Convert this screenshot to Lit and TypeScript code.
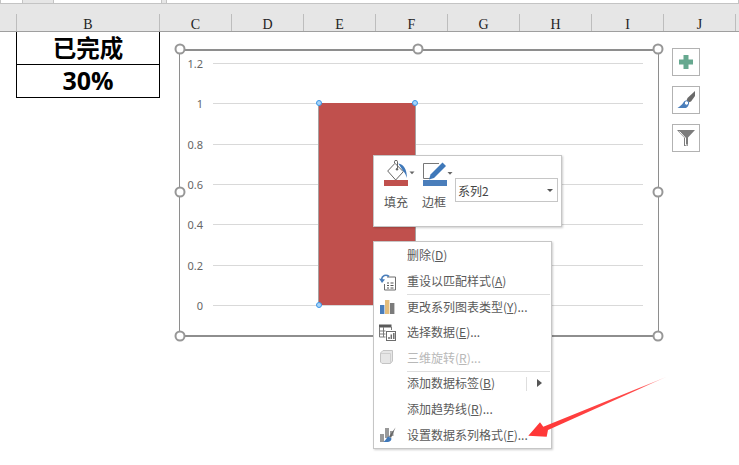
import { LitElement, html, css, svg } from "lit";
import { customElement } from "lit/decorators.js";

const COLS = [
  { n: "B", w: 143 }, { n: "C", w: 72 }, { n: "D", w: 72 }, { n: "E", w: 72 },
  { n: "F", w: 72 }, { n: "G", w: 72 }, { n: "H", w: 72 }, { n: "I", w: 72 }, { n: "J", w: 72 },
];
const TICKS = ["1.2", "1", "0.8", "0.6", "0.4", "0.2", "0"];

const ICONS: Record<string, unknown> = {
  reset: svg`<svg width="18" height="18" viewBox="0 0 18 18"><path d="M8 4h8.500v13H5.500v-6" fill="#fff" stroke="#6d6d6d"/><path d="M8 10h2M8 12.500h2M8 15h2M11.500 10h3M11.500 12.500h3M11.500 15h3" stroke="#555"/><path d="M2.500 6.500C3 2.500 7 1 10 3.500" fill="none" stroke="#4a7ebb" stroke-width="1.700"/><path d="M0 5.500l3 4.500 3-3.500z" fill="#4a7ebb"/></svg>`,
  chart: svg`<svg width="18" height="18" viewBox="0 0 18 18"><rect x="1" y="7" width="4.400" height="9" fill="#4a7ebb"/><rect x="6" y="2" width="4.400" height="14" fill="#e4bd7c"/><rect x="11" y="5" width="4.400" height="11" fill="#7b7b7b"/></svg>`,
  data: svg`<svg width="18" height="18" viewBox="0 0 18 18"><rect x="0" y="0.500" width="12.500" height="3" fill="#5a5a5a"/><path d="M.5 3v10h6M12.500 3v3M.5 7h6M.5 10h6M4.500 3v10" fill="none" stroke="#7a7a7a"/><rect x="7.500" y="7.500" width="9" height="9" fill="#fff" stroke="#6d6d6d"/><path d="M10 15v-2M12.300 15v-4.500M14.800 15V9" stroke="#6d6d6d" stroke-width="1.500"/></svg>`,
  cube: svg`<svg width="18" height="18" viewBox="0 0 18 18"><path d="M1.500 4L4 1.500h9.500V12L11.500 14.500H3L1.500 13z" fill="#e6e6e6" stroke="#c4c4c4" stroke-linejoin="round"/><path d="M1.500 4.500h10v10" fill="none" stroke="#cfcfcf"/></svg>`,
  format: svg`<svg width="18" height="18" viewBox="0 0 18 18"><rect x="1" y="8" width="4" height="8" fill="#999"/><rect x="6" y="2" width="4" height="10" fill="#999"/><rect x="11" y="5" width="3.500" height="5" fill="#999"/><path d="M16.500 1.500L10 10.500l2 1.500z" fill="#666"/><path d="M9.500 10.500c-1.500.5-2 3-5 5.500h4.500c2.500-.5 3.500-2 3.500-3.500z" fill="#3f78b9"/></svg>`,
};

const MENU = [
  { t: "删除(", k: "D", e: ")" },
  { t: "重设以匹配样式(", k: "A", e: ")", i: "reset" },
  { sep: true },
  { t: "更改系列图表类型(", k: "Y", e: ")...", i: "chart" },
  { t: "选择数据(", k: "E", e: ")...", i: "data" },
  { t: "三维旋转(", k: "R", e: ")...", i: "cube", off: true },
  { sep: true },
  { t: "添加数据标签(", k: "B", e: ")", sub: true },
  { t: "添加趋势线(", k: "R", e: ")..." },
  { t: "设置数据系列格式(", k: "F", e: ")...", i: "format" },
] as any[];

@customElement("app-root")
export class AppRoot extends LitElement {
  static styles = css`
    :host { display: block; position: relative; width: 739px; height: 465px; overflow: hidden; background: #fff;
      font-family: "Noto Sans CJK SC", "Noto Sans", sans-serif; }
    .tabs { display: flex; height: 3px; background: #e6e6e6; border-bottom: 1px solid #c4c4c4; }
    .tab { height: 3px; background: #fff; box-shadow: inset 1px 0 #c4c4c4, inset -1px 0 #c4c4c4; }
    .band { height: 10px; background: #e6e6e6; }
    .head { display: flex; height: 17px; padding-left: 16px; background: #e6e6e6; border-bottom: 1px solid #9f9f9f; }
    .col { flex: none; border-left: 1px solid #bdbdbd; box-sizing: border-box; text-align: center;
      font: 14px/13px "Liberation Serif", serif; padding-top: 4px; color: #222; }
    .sheet { position: relative; height: 433px; }
    .table { margin-left: 16px; width: 144px; border: 1px solid #000; border-top: 0; box-sizing: border-box; }
    .cell { height: 32px; display: flex; align-items: center; justify-content: center; font-weight: 700; font-size: 23.500px; line-height: 24px; color: #000; }
    .cell + .cell { height: 33px; border-top: 1px solid #000; box-sizing: border-box; }
    .cell span { margin-top: -3px; }
    .pct { font-family: "Open Sans", sans-serif; font-size: 25px; }
    .chart { position: absolute; left: 179px; top: 17px; width: 480px; height: 288px; box-sizing: border-box;
      border: 1px solid #8e8e8e; border-top-width: 2px; border-bottom-width: 2px; }
    .h { position: absolute; width: 7px; height: 7px; border: 2px solid #979797; border-radius: 50%; background: #fff; transform: translate(-50%, -50%); }
    .plot { position: absolute; left: 0; right: 0; top: 12px; display: flex; flex-direction: column; }
    .row { height: 40.330px; display: flex; align-items: flex-start; }
    .lab { width: 23px; height: 1px; line-height: 1px; text-align: right; font-size: 11px; color: #666; font-family: "Noto Sans", sans-serif; flex: none; }
    .line { margin-left: 10px; width: 430px; height: 1px; background: #d9d9d9; flex: none; }
    .bar { position: absolute; left: 139px; top: 52px; width: 96px; height: 202px; background: #c0504d; box-shadow: -1px 0 #a8a0a0, 1px 0 #a8a0a0; }
    .pt { position: absolute; width: 4px; height: 4px; border: 1.500px solid #3a96e8; border-radius: 50%; background: #a8d4f7; transform: translate(-50%, -50%); }
    .side { position: absolute; left: 672px; top: 16px; display: flex; flex-direction: column; gap: 10px; }
    .btn { width: 28px; height: 28px; box-sizing: border-box; border: 1px solid #b2b2b2; background: #fff; display: flex; align-items: center; justify-content: center; }
    .mini { position: absolute; left: 373px; top: 123px; width: 189px; height: 72px; box-sizing: border-box; background: #fff; border: 1px solid #c6c6c6;
      box-shadow: 1px 1px 2px #0003; display: flex; padding: 4px 3px 0 10px; gap: 8px; }
    .tool { display: flex; flex-direction: column; width: 30px; font-size: 12px; color: #555; position: relative; }
    .tool svg { display: block; }
    .tool span { margin-top: 7px; line-height: 17px; white-space: nowrap; }
    .select { flex: none; margin: 18px 0 0 -5px; width: 103px; height: 24px; box-sizing: border-box; border: 1px solid #c6c6c6; display: flex; align-items: center;
      justify-content: space-between; padding: 0 4px 0 2px; font-size: 12px; color: #444; }
    .caret { width: 0; height: 0; border: 3px solid transparent; border-top: 3px solid #555; border-bottom: 0; }
    .menu { position: absolute; left: 373px; top: 209px; width: 179px; box-sizing: border-box; padding: 1.200px 0 0; background: #fff; border: 1px solid #c6c6c6; box-shadow: 1px 1px 2px #0003; height: 208px; }
    .item { height: 25.600px; display: flex; align-items: center; font-size: 12px; color: #5a5a5a; white-space: nowrap; position: relative; }
    .item span { margin-top: -2px; }
    .item.off { color: #b8b8b8; }
    .ic { width: 33px; flex: none; display: flex; }
    .ic svg { display: block; margin-left: 5px; }
    .sep { height: 1px; margin: -0.500px 1px -0.500px 33px; background: #dedede; position: relative; }
    u { text-underline-offset: 1px; }
    .sub { position: absolute; right: 9px; top: 8px; width: 0; height: 0; border: 4px solid transparent; border-left: 5px solid #555; border-right: 0; }
    .subline { position: absolute; right: 24px; top: 6px; width: 1px; height: 14px; background: #dedede; }
    .arrow { position: absolute; left: 0; top: 0; overflow: visible; pointer-events: none; }
  `;

  render() {
    return html`
      <div class="tabs">
        <div class="tab" style="width:23px"></div>
        <div class="tab" style="width:109px;margin-left:30px"></div>
        <div class="tab" style="width:573px;margin-left:4px"></div>
      </div>
      <div class="band"></div>
      <div class="head">
        ${COLS.map((c) => html`<div class="col" style="width:${c.w}px">${c.n}</div>`)}
        <div class="col" style="width:4px"></div>
      </div>
      <div class="sheet">
        <div class="table">
          <div class="cell"><span>已完成</span></div>
          <div class="cell pct"><span>30%</span></div>
        </div>

        <div class="chart">
          <div class="plot">
            ${TICKS.map((t) => html`<div class="row"><div class="lab">${t}</div><div class="line"></div></div>`)}
          </div>
          <div class="bar"></div>
          <i class="pt" style="left:139px;top:52px"></i>
          <i class="pt" style="left:235px;top:52px"></i>
          <i class="pt" style="left:139px;top:254px"></i>
          <i class="pt" style="left:235px;top:254px"></i>
          ${[[0, -2], [238, -2], [478, -2], [0, 141], [478, 141], [0, 285], [238, 285], [478, 285]].map(
            ([x, y]) => html`<i class="h" style="left:${x}px;top:${y}px"></i>`
          )}
        </div>

        <div class="side">
          <div class="btn"><svg width="14" height="14" viewBox="0 0 14 14"><path d="M4.500 0h5v4.500H14v5H9.500V14h-5V9.500H0v-5h4.500z" fill="#66a88f"/></svg></div>
          <div class="btn"><svg width="20" height="20" viewBox="0 0 20 20"><path d="M19 1L11.500 8 10.500 10.500 12.500 12.500 15 11.500 19 6z" fill="#6a6a6a"/><path d="M9 11c-1.500.5-2 3.500-7.500 7h8.500c2-1 3-3 2.500-5z" fill="#4a7ebb"/><circle cx="10.500" cy="13" r="2.200" fill="#fff" stroke="#4a7ebb"/></svg></div>
          <div class="btn"><svg width="20" height="20" viewBox="0 0 20 20"><path d="M1 2h18l-7 7.500V18H8V9.500z" fill="#7c7c7c"/><path d="M3.500 3.500l6 6.500V17h2" fill="none" stroke="#fff"/></svg></div>
        </div>

        <div class="mini">
          <div class="tool">
            <svg width="32" height="26" viewBox="0 0 32 26">
              <path d="M11 3.300L3.700 11l8 9 7.600-8.300z" fill="#fff" stroke="#666"/>
              <path d="M10.500 3V1.800a1.500 1.500 0 0 1 3 0V8.500" fill="none" stroke="#666"/><circle cx="13" cy="9.300" r="1.200" fill="#666"/>
              <path d="M14.300 3.500c5 .5 9 6 8.500 14.500-.8-2.500-1.500-5-4-7.500z" fill="#3f78b9"/>
              <path d="M25.500 11.500h5l-2.500 2.800z" fill="#666"/>
              <rect x="0" y="20" width="24" height="6" fill="#c0504d"/>
            </svg>
            <span>填充</span>
          </div>
          <div class="tool">
            <svg width="32" height="26" viewBox="0 0 32 26">
              <path d="M17 3.500H1.500V18.500H8" fill="none" stroke="#777"/>
              <path d="M20.500 2.500L24 6 12 18l-5 1.500L8.500 14.500z" fill="#3f78b9"/>
              <path d="M25.500 12h5l-2.500 2.800z" fill="#666"/>
              <rect x="1" y="20" width="24" height="6" fill="#4a7ebb"/>
            </svg>
            <span>边框</span>
          </div>
          <div class="select"><span>系列2</span><i class="caret"></i></div>
        </div>

        <div class="menu">
          ${MENU.map((m) =>
            m.sep
              ? html`<div class="sep"></div>`
              : html`<div class="item ${m.off ? "off" : ""}">
                  <div class="ic">${m.i ? ICONS[m.i] : ""}</div>
                  <span>${m.t}<u>${m.k}</u>${m.e}</span>
                  ${m.sub ? html`<i class="subline"></i><i class="sub"></i>` : ""}
                </div>`
          )}
        </div>

        <svg class="arrow" width="739" height="433" viewBox="0 0 739 433">
          <defs><linearGradient id="a" x1="528" y1="0" x2="667" y2="0" gradientUnits="userSpaceOnUse">
            <stop offset="0" stop-color="#ff3636"/><stop offset=".8" stop-color="#ff4a4a"/><stop offset="1" stop-color="#fdd4d4"/></linearGradient></defs>
          <path d="M528.300 403.700L540 390.300l3.300 4.400L666.700 344.700 548 398l-1.300 6.700z" fill="url(#a)"/>
        </svg>
      </div>
    `;
  }
}
